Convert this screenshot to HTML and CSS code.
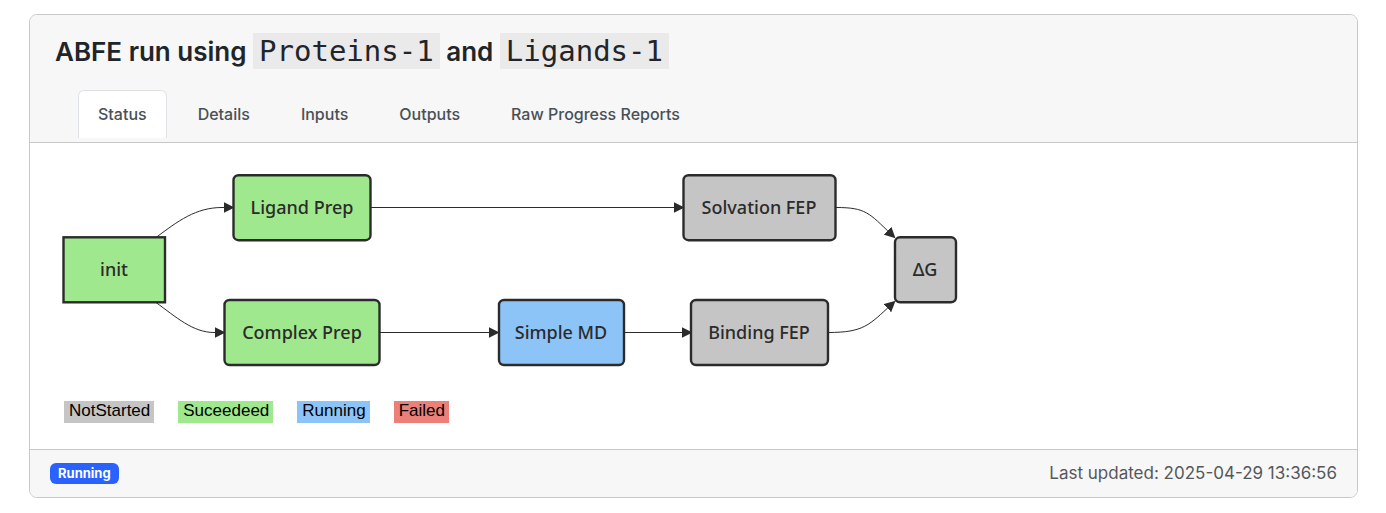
FILE: index.html
```html
<!DOCTYPE html>
<html lang="en">
<head>
<meta charset="utf-8">
<title>ABFE run</title>
<link rel="stylesheet" href="styles.css">
</head>
<body>
<main class="card">
  <header class="card-header">
    <h1 class="title">ABFE run using <code>Proteins-1</code> and <code>Ligands-1</code></h1>
    <nav class="tabs" role="tablist">
      <button class="tab active" type="button" role="tab" aria-selected="true">Status</button>
      <button class="tab" type="button" role="tab" aria-selected="false">Details</button>
      <button class="tab" type="button" role="tab" aria-selected="false">Inputs</button>
      <button class="tab" type="button" role="tab" aria-selected="false">Outputs</button>
      <button class="tab" type="button" role="tab" aria-selected="false">Raw Progress Reports</button>
    </nav>
  </header>
  <section class="card-body">
    <svg class="flow" viewBox="0 0 910 206" role="img" aria-label="Run progress">
      <defs>
        <marker id="arrow" viewBox="0 0 10 10" refX="5" refY="5" markerWidth="11" markerHeight="11" markerUnits="userSpaceOnUse" orient="auto">
          <path class="head" d="M0 0L10 5L0 10z"/>
        </marker>
      </defs>
      <g class="edges">
        <path d="M102 70.500C124 54 142 40.500 168 40.500H175"/>
        <path d="M102 135.500C122 150 139 165.500 160 165.500H166"/>
        <path d="M316.500 40.500H625"/>
        <path d="M325.500 165.500H440"/>
        <path d="M570 165.500H633"/>
        <path d="M782 40.500C812 40.500 815 46 837.500 67.500"/>
        <path d="M774 165.500C810 165.500 815 158 837.500 137.500"/>
      </g>
      <g class="node done" stroke-width="2.4"><rect x="9.500" y="70.300" width="101.500" height="65"/><text x="60" y="109">init</text></g>
      <g class="node done" stroke-width="2.4"><rect x="179.500" y="8.200" width="137" height="65" rx="5"/><text x="248" y="47">Ligand Prep</text></g>
      <g class="node done" stroke-width="2.4"><rect x="170.500" y="133" width="155" height="65" rx="5"/><text x="248" y="172">Complex Prep</text></g>
      <g class="node running" stroke-width="2.4"><rect x="445" y="133" width="125" height="65" rx="5"/><text x="507" y="172">Simple MD</text></g>
      <g class="node idle" stroke-width="2.4"><rect x="637" y="133" width="137" height="65" rx="5"/><text x="705" y="172">Binding FEP</text></g>
      <g class="node idle" stroke-width="2.4"><rect x="629.500" y="8.200" width="152" height="65" rx="5"/><text x="705" y="47">Solvation FEP</text></g>
      <g class="node idle" stroke-width="2.4"><rect x="841" y="70.300" width="61" height="65" rx="5"/><text x="871" y="109">ΔG</text></g>
    </svg>
    <div class="legend">
      <span class="key idle">NotStarted</span>
      <span class="key done">Suceedeed</span>
      <span class="key running">Running</span>
      <span class="key failed">Failed</span>
    </div>
  </section>
  <footer class="card-footer">
    <span class="badge">Running</span>
    <span class="updated">Last updated: 2025-04-29 13:36:56</span>
  </footer>
</main>
</body>
</html>
```
FILE: styles.css
```css
* { box-sizing: border-box; }

body {
  margin: 14px 28px 14px 29px;
  background: #fff;
  color: #212529;
  font: 16px/24px Inter, sans-serif;
}

.card {
  border: 1px solid #c8c8c8;
  border-radius: 8px;
  overflow: hidden;
}

.card-header {
  background: #f7f7f7;
  border-bottom: 1px solid #c8c8c8;
  padding: 18px 25px 4px;
}

.title {
  margin: 0;
  font-size: 26px;
  line-height: 36px;
  font-weight: 600;
}

.title code {
  padding: 1px 6px;
  background: #eaeaea;
  font: 400 29px "DejaVu Sans Mono", monospace;
  line-height: 36px;
}

.tabs {
  display: flex;
  gap: 11px;
  margin-top: 20px;
  padding-left: 23px;
}

.tab {
  padding: 11px 19px 12px;
  border: 1px solid transparent;
  border-bottom: 0;
  border-radius: 6px 6px 0 0;
  background: none;
  color: #495057;
  font: 500 16px/24px Inter, sans-serif;
}

.tab.active {
  background: #fff;
  border-color: #dee2e6;
}

.card-body { padding: 24px 24px 26px; }

.flow {
  display: block;
  width: 100%;
  max-width: 910px;
}

.edges path {
  fill: none;
  stroke: #2b2b2b;
  stroke-width: 1px;
  marker-end: url(#arrow);
}

.head { fill: #2b2b2b; }

.node rect { stroke: #2b2b2b; }

.node text {
  fill: #2b2b2b;
  font: 500 18px "Noto Sans", sans-serif;
  text-anchor: middle;
}

.node.idle { fill: #c5c5c5; }
.node.done { fill: #9fe88d; }
.node.running { fill: #8dc4f7; }

.legend {
  display: flex;
  gap: 24px;
  margin: 28px 10px 0;
}

.key {
  padding: 0 4px 3px 5px;
  color: #000;
  font: 17px/19px "Liberation Sans", Arial, sans-serif;
}

.key.idle { background: #c5c5c5; }
.key.done { background: #9fe88d; }
.key.running { background: #8dc4f7; }
.key.failed { background: #ec7f78; }

.card-footer {
  display: flex;
  align-items: center;
  justify-content: space-between;
  padding: 11px 20px 12px;
  border-top: 1px solid #c8c8c8;
  background: #f7f7f7;
}

.badge {
  padding: 0 8px;
  border-radius: 6px;
  background: #2962ff;
  color: #fff;
  font-size: 13px;
  line-height: 21px;
  font-weight: 700;
}

.updated {
  color: #55585b;
  font-size: 17px;
}
```
